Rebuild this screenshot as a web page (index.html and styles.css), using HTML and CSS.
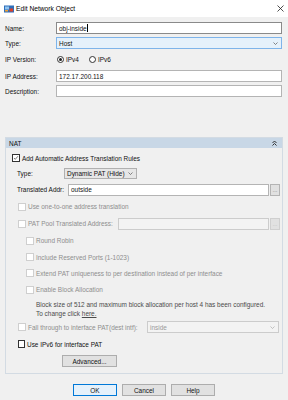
FILE: index.html
```html
<!DOCTYPE html>
<html lang="en">
<head>
    <meta charset="UTF-8">
    <meta name="viewport" content="width=device-width, initial-scale=1.0">
    <title>Edit Network Object</title>
    <link rel="stylesheet" href="styles.css">
</head>
<body>
    <div class="titlebar">
        <svg class="app-icon" viewBox="0 0 10 8">
            <rect x="0" y="0.5" width="10" height="7" fill="#2f6fba"/>
            <rect x="1" y="1.5" width="4" height="3" fill="#8fc3ef"/>
            <rect x="5.5" y="3.5" width="3.5" height="3" fill="#d9402b"/>
            <rect x="1" y="5" width="3" height="1.5" fill="#f0a030"/>
        </svg>
        <span class="title">Edit Network Object</span>
        <svg class="close" viewBox="0 0 7 7">
            <path d="M0.5 0.5 L6.5 6.5 M6.5 0.5 L0.5 6.5" stroke="#222" stroke-width="0.8" fill="none"/>
        </svg>
    </div>

    <div class="form">
        <div class="row">
            <span class="lbl">Name:</span>
            <div class="field focus">obj-inside<span class="caret"></span></div>
        </div>
        <div class="row">
            <span class="lbl">Type:</span>
            <div class="field select hover">
                <span class="grow">Host</span>
                <svg class="chev" viewBox="0 0 5 3"><polyline points="0.5,0.5 2.5,2.5 4.5,0.5" fill="none" stroke="#555" stroke-width="0.7"/></svg>
            </div>
        </div>
        <div class="row tall">
            <span class="lbl">IP Version:</span>
            <span class="radio on"></span><span class="radio-text">IPv4</span>
            <span class="radio"></span><span class="radio-text">IPv6</span>
        </div>
        <div class="row">
            <span class="lbl">IP Address:</span>
            <div class="field">172.17.200.118</div>
        </div>
        <div class="row">
            <span class="lbl">Description:</span>
            <div class="field"></div>
        </div>
    </div>

    <div class="panel">
        <div class="panel-head">
            <span class="grow">NAT</span>
            <svg class="collapse" viewBox="0 0 5 6">
                <polyline points="0.5,3 2.5,1 4.5,3" fill="none" stroke="#222" stroke-width="0.9"/>
                <polyline points="0.5,5.5 2.5,3.5 4.5,5.5" fill="none" stroke="#222" stroke-width="0.9"/>
            </svg>
        </div>
        <div class="panel-body">
            <div class="prow h12 ind-1">
                <span class="cb checked">
                    <svg viewBox="0 0 8 8"><polyline points="1.3,4 3,5.8 6.6,1.6" fill="none" stroke="#222" stroke-width="0.8"/></svg>
                </span>
                <span class="cb-text">Add Automatic Address Translation Rules</span>
            </div>
            <div class="prow h11 ind-2">
                <span class="plbl type-lbl">Type:</span>
                <div class="field select pat-type">
                    <span class="grow">Dynamic PAT (Hide)</span>
                    <svg class="chev" viewBox="0 0 5 3"><polyline points="0.5,0.5 2.5,2.5 4.5,0.5" fill="none" stroke="#555" stroke-width="0.7"/></svg>
                </div>
            </div>
            <div class="prow h13 ind-2 pr-2">
                <span class="plbl trans-lbl">Translated Addr:</span>
                <div class="field">outside</div>
                <span class="dots">&#8230;</span>
            </div>
            <div class="prow h13 ind-3 disabled">
                <span class="cb"></span>
                <span class="cb-text">Use one-to-one address translation</span>
            </div>
            <div class="prow h13 ind-3 pr-2 disabled">
                <span class="cb"></span>
                <span class="cb-text pool-lbl">PAT Pool Translated Address:</span>
                <div class="field off"></div>
                <span class="dots off">&#8230;</span>
            </div>
            <div class="prow h13 ind-4 disabled">
                <span class="cb"></span>
                <span class="cb-text">Round Robin</span>
            </div>
            <div class="prow h12 ind-4 disabled">
                <span class="cb"></span>
                <span class="cb-text">Include Reserved Ports (1-1023)</span>
            </div>
            <div class="prow h12 ind-4 disabled">
                <span class="cb"></span>
                <span class="cb-text">Extend PAT uniqueness to per destination instead of per interface</span>
            </div>
            <div class="prow h13 ind-4 disabled">
                <span class="cb"></span>
                <span class="cb-text">Enable Block Allocation</span>
            </div>
            <div class="note">
                Block size of 512 and maximum block allocation per host 4 has been configured.<br>
                To change click <u>here.</u>
            </div>
            <div class="prow h12 ind-3 pr-3 disabled">
                <span class="cb"></span>
                <span class="cb-text fall-lbl">Fall through to interface PAT(dest intf):</span>
                <div class="field select off">
                    <span class="grow">inside</span>
                    <svg class="chev" viewBox="0 0 5 3"><polyline points="0.5,0.5 2.5,2.5 4.5,0.5" fill="none" stroke="#aaa" stroke-width="0.7"/></svg>
                </div>
            </div>
            <div class="prow h14 ind-3">
                <span class="cb dark"></span>
                <span class="cb-text">Use IPv6 for interface PAT</span>
            </div>
            <div class="prow h12">
                <span class="btn advanced">Advanced...</span>
            </div>
        </div>
    </div>

    <div class="footer">
        <span class="btn default">OK</span>
        <span class="btn">Cancel</span>
        <span class="btn">Help</span>
    </div>
</body>
</html>
```

FILE: styles.css
```css
* {
    box-sizing: border-box;
}

body {
    margin: 0;
    width: 288px;
    height: 400px;
    overflow: hidden;
    background-color: #f0f0f0;
    font-family: "Liberation Sans", Arial, sans-serif;
    font-size: 6.45px;
    color: #111;
}

.grow {
    flex: 1;
}

/* title bar */
.titlebar {
    height: 17px;
    background-color: #fff;
    display: flex;
    align-items: center;
    padding: 0 4px;
}

.app-icon {
    width: 10px;
    height: 8px;
    margin-right: 2px;
}

.title {
    flex: 1;
    font-size: 6.7px;
    color: #000;
}

.close {
    width: 7px;
    height: 7px;
}

/* top form */
.form {
    display: flex;
    flex-direction: column;
    gap: 3px;
    padding: 5px 6px 0 5px;
}

.row {
    display: flex;
    align-items: center;
    height: 12px;
}

.row.tall {
    height: 15px;
}

.lbl {
    width: 51px;
}

.field {
    flex: 1;
    height: 12px;
    display: flex;
    align-items: center;
    padding: 0 2px;
    background-color: #fff;
    border: 1px solid #b4b4b4;
    white-space: nowrap;
}

.field.focus {
    border-color: #8a8a8a;
}

.caret {
    display: inline-block;
    width: 1px;
    height: 8px;
    margin-left: 0.5px;
    background-color: #000;
}

.field.select.hover {
    background-color: #e5f1fb;
    border-color: #7eb4ea;
}

.chev {
    width: 5px;
    height: 3px;
    margin-right: 1px;
}

.radio {
    width: 7px;
    height: 7px;
    margin-left: 1px;
    border: 1px solid #333;
    border-radius: 50%;
    background-color: #fff;
    display: flex;
    align-items: center;
    justify-content: center;
}

.radio.on::after {
    content: "";
    width: 3px;
    height: 3px;
    border-radius: 50%;
    background-color: #222;
}

.radio-text {
    margin-left: 2px;
    width: 22px;
}

/* NAT panel */
.panel {
    margin: 40px 5px 0 5px;
    border: 1px solid #d3dbe3;
}

.panel-head {
    height: 10px;
    display: flex;
    align-items: center;
    padding: 0 5px 0 3px;
    background-color: #c8d7e6;
    color: #111;
}

.collapse {
    width: 5px;
    height: 6px;
}

.panel-body {
    display: flex;
    flex-direction: column;
    gap: 4px;
    padding: 4px 0 6px 0;
}

.prow {
    display: flex;
    align-items: center;
}

.h11 { height: 11px; }
.h12 { height: 12px; }
.h13 { height: 13px; }
.h14 { height: 14px; }

.ind-1 { padding-left: 6px; }
.ind-2 { padding-left: 11px; }
.ind-3 { padding-left: 12px; }
.ind-4 { padding-left: 20px; }
.pr-2 { padding-right: 2px; }
.pr-3 { padding-right: 3px; }

.cb {
    width: 8px;
    height: 8px;
    flex-shrink: 0;
    background-color: #fff;
    border: 1px solid #333;
    display: flex;
}

.cb svg {
    width: 6px;
    height: 6px;
}

.cb.dark {
    width: 7px;
    height: 8px;
}

.cb-text {
    margin-left: 2px;
    white-space: nowrap;
}

.disabled {
    color: #8e8e8e;
}

.disabled .cb {
    border-color: #cfcfcf;
}

.plbl {
    white-space: nowrap;
}

.type-lbl {
    width: 47px;
}

.trans-lbl {
    width: 51px;
}

.pool-lbl {
    width: 90px;
}

.fall-lbl {
    width: 119px;
}

.pat-type {
    flex: none;
    width: 73px;
    height: 11px;
    background-color: #e6e6e6;
    border-color: #b0b0b0;
}

.field.off {
    height: 12px;
    background-color: #f3f3f3;
    border-color: #cccccc;
    color: #9a9a9a;
}

.dots {
    width: 10px;
    height: 12px;
    margin-left: 1px;
    display: flex;
    align-items: center;
    justify-content: center;
    background-color: #e1e1e1;
    border: 1px solid #b4b4b4;
    color: #555;
    font-size: 5px;
}

.dots.off {
    border-color: #cfcfcf;
    color: #aaa;
}

.note {
    height: 17px;
    padding-left: 30px;
    line-height: 9px;
    color: #4a4a4a;
}

.note u {
    text-decoration-thickness: 0.5px;
}

/* buttons */
.btn {
    height: 12px;
    display: flex;
    align-items: center;
    justify-content: center;
    background-color: #e1e1e1;
    border: 1px solid #adadad;
    color: #111;
}

.advanced {
    width: 55px;
    margin-left: 56px;
}

.footer {
    display: flex;
    justify-content: center;
    gap: 5px;
    margin-top: 10px;
}

.footer .btn {
    width: 44px;
}

.btn.default {
    background-color: #e5f1fb;
    border-color: #0078d7;
}
```
